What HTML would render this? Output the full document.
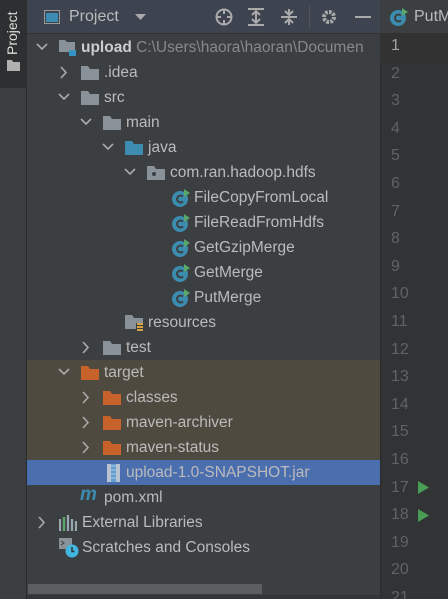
<!DOCTYPE html>
<html><head><style>
*{margin:0;padding:0;box-sizing:border-box}
html,body{width:448px;height:599px;overflow:hidden}
body{background:#3c3f41;font-family:"Liberation Sans",sans-serif;position:relative;color:#bbbbbb}
.strip{position:absolute;left:0;top:0;width:27px;height:599px;background:#3c3f41;border-right:1px solid #2b2b2b}
.tab{position:absolute;left:0;top:0;width:27px;height:88px;background:#2d2f30}
.tab span{position:absolute;left:4px;top:55px;transform:rotate(-90deg);transform-origin:0 0;font-size:14px;color:#ddd}
.hdr{position:absolute;left:27px;top:0;width:353px;height:34px;background:#3d4450;border-bottom:1px solid #323232}
.row{position:absolute;left:27px;width:353px;height:25px;font-size:15.5px;line-height:25px;white-space:nowrap}
.row svg{position:absolute}
.row .t{position:absolute}
.ed{position:absolute;left:380px;top:0;width:68px;height:599px;background:#313335;border-left:1px solid #2b2b2b}
.edh{position:absolute;left:380px;top:0;width:68px;height:34px;background:#3c3f41;border-bottom:1px solid #323232}
.ln{position:absolute;left:391px;width:30px;font-size:16px;color:#606366}
</style></head><body>
<div class="strip"><div class="tab"><span>Project</span>
<svg style="position:absolute;left:7px;top:60px" width="13" height="11"><path d="M0 0h5l1 2h7v9H0z" fill="#b0b0b0"/></svg></div></div>
<div class="hdr">
<svg style="position:absolute;left:17px;top:10px" width="16" height="14"><rect x="0.5" y="0.5" width="15" height="13" fill="none" stroke="#999" /><rect x="2" y="3" width="12" height="9" fill="#3c8cb4"/></svg>
<span style="position:absolute;left:42px;top:8px;font-size:16px;color:#bbb">Project</span>
<svg style="position:absolute;left:108px;top:14px" width="11" height="7"><path d="M0 0h11L5.5 6z" fill="#aaa"/></svg>
<svg style="position:absolute;left:188px;top:8px" width="18" height="18"><circle cx="9" cy="9" r="7.5" fill="none" stroke="#aaa" stroke-width="2"/><path d="M9 1v5M9 12v5M1 9h5M12 9h5" stroke="#aaa" stroke-width="2"/></svg>
<svg style="position:absolute;left:221px;top:8px" width="16" height="18"><path d="M0 1h16M0 17h16M8 4v10M4 7l4-4 4 4M4 11l4 4 4-4" stroke="#aaa" stroke-width="2" fill="none"/></svg>
<svg style="position:absolute;left:254px;top:8px" width="16" height="18"><path d="M0 9h16M8 1v6M8 11v6M4 3l4 4 4-4M4 15l4-4 4 4" stroke="#aaa" stroke-width="2" fill="none"/></svg>
<div style="position:absolute;left:282px;top:6px;width:1px;height:22px;background:#555"></div>
<svg style="position:absolute;left:294px;top:9px" width="16" height="16"><circle cx="8" cy="8" r="5" fill="none" stroke="#aaa" stroke-width="4" stroke-dasharray="2.6 1.3"/><circle cx="8" cy="8" r="2" fill="#3d4450"/></svg>
<div style="position:absolute;left:328px;top:16px;width:16px;height:2px;background:#aaa"></div>
</div>

<div class="row" style="top:35px"><svg style="left:9px;top:8px" width="12" height="8"><path d="M1 1l5 5 5-5" stroke="#aaa" stroke-width="1.6" fill="none"/></svg>
<svg style="left:32px;top:5px" width="18" height="16"><path d="M0 0h6l2 2h8v10H0z" fill="#8a9299"/><rect x="10" y="10" width="7" height="6" fill="#3592c4"/></svg>
<span class="t" style="left:54px"><b style="color:#ccc">upload</b> <span style="color:#888">C:\Users\haora\haoran\Documen</span></span></div>

<div id="tree"></div>
<script>
var rows=[
[60,1,'c','f','.idea'],[85,1,'o','f','src'],[110,2,'o','f','main'],[135,3,'o','j','java'],[160,4,'o','p','com.ran.hadoop.hdfs'],
[185,5,'','c','FileCopyFromLocal'],[210,5,'','c','FileReadFromHdfs'],[235,5,'','c','GetGzipMerge'],[260,5,'','c','GetMerge'],[285,5,'','c','PutMerge'],
[310,3,'','r','resources'],[335,2,'c','f','test'],[360,1,'o','t','target'],[385,2,'c','t','classes'],[410,2,'c','t','maven-archiver'],[435,2,'c','t','maven-status'],
[460,2,'','jar','upload-1.0-SNAPSHOT.jar'],[485,1,'','m','pom.xml'],[510,0,'c','l','External Libraries'],[535,0,'','s','Scratches and Consoles']];
var h='';
rows.forEach(function(r){
 var top=r[0],lv=r[1],x=9+lv*22,bg='';
 if(top>=360&&top<460)bg='background:#4f4a3f;';
 if(top==460)bg='background:#4b6eaf;';
 h+='<div class="row" style="top:'+top+'px;'+bg+'">';
 if(r[2]=='c')h+='<svg style="left:'+(x+2)+'px;top:6px" width="8" height="13"><path d="M1 1l5 5.5-5 5.5" stroke="#aaa" stroke-width="1.6" fill="none"/></svg>';
 if(r[2]=='o')h+='<svg style="left:'+x+'px;top:8px" width="12" height="8"><path d="M1 1l5 5 5-5" stroke="#aaa" stroke-width="1.6" fill="none"/></svg>';
 var ix=x+23,i=r[3],s='';
 if(i=='f'||i=='j'||i=='t'){var c=i=='f'?'#8a9299':i=='j'?'#3d8cb0':'#c7622b';s='<svg style="left:'+ix+'px;top:6px" width="18" height="14"><path d="M0 0h7l2 3h9v11H0z" fill="'+c+'"/></svg>';}
 if(i=='p')s='<svg style="left:'+ix+'px;top:6px" width="18" height="14"><path d="M0 0h7l2 3h9v11H0z" fill="#8a9299"/><circle cx="7" cy="8" r="2" fill="#3c3f41"/></svg>';
 if(i=='r')s='<svg style="left:'+ix+'px;top:5px" width="19" height="17"><path d="M0 0h7l2 3h9v11H0z" fill="#8a9299"/><rect x="11" y="8" width="7" height="9" fill="#3c3f41"/><path d="M12 9h6M12 12h6M12 15h6" stroke="#d9a343" stroke-width="2"/></svg>';
 if(i=='c')s='<svg style="left:'+(ix+3)+'px;top:4px" width="19" height="18"><circle cx="8" cy="10" r="8" fill="#3c8cb0"/><path d="M11 7.5a3.5 3.5 0 1 0 0 5" stroke="#3c3f41" stroke-width="2" fill="none"/><path d="M12 0l6 4-6 4z" fill="#59a869"/></svg>';
 if(i=='jar')s='<svg style="left:'+(ix+3)+'px;top:4px" width="16" height="18"><rect x="1" y="0" width="13" height="18" fill="#b9c4d2"/><rect x="5" y="0" width="5" height="18" fill="#5f9fd3"/><path d="M5 2h5M5 6h5M5 10h5M5 14h5" stroke="#b9c4d2" stroke-width="1"/></svg>';
 if(i=='m')s='<span style="position:absolute;left:'+(ix-1)+'px;top:-1px;font:italic bold 19px Liberation Sans,sans-serif;color:#3d8cb0">m</span>';
 if(i=='l')s='<svg style="left:'+ix+'px;top:5px" width="18" height="16"><path d="M1 4v12M5 2v14M9 0v16M13 4v12M17 6v10" stroke="#9aa7b0" stroke-width="2.2"/><path d="M5 2v14" stroke="#59a869" stroke-width="2.2"/></svg>';
 if(i=='s')s='<svg style="left:'+ix+'px;top:3px" width="20" height="20"><rect x="0" y="0" width="13" height="11" fill="#8a9299"/><path d="M2 3l3 2-3 2" stroke="#3c3f41" fill="none"/><circle cx="13" cy="13" r="6.5" fill="#40b6e0"/><path d="M13 9v4.5h2.5" stroke="#333" stroke-width="1.5" fill="none"/></svg>';
 var tx=ix+23; if(i=='c')tx=ix+25;
 h+=s+'<span class="t" style="left:'+tx+'px">'+r[4]+'</span></div>';
});
document.getElementById('tree').innerHTML=h;
</script>
<div style="position:absolute;left:28px;top:584px;width:234px;height:10px;background:#5b5d5f"></div>
<div style="position:absolute;left:27px;top:595px;width:353px;height:4px;background:#333537"></div>

<div class="ed"></div>
<div class="edh">
<svg style="position:absolute;left:10px;top:8px" width="19" height="18"><circle cx="8" cy="10" r="8" fill="#3c8cb0"/><path d="M11 7.5a3.5 3.5 0 1 0 0 5" stroke="#3c3f41" stroke-width="2" fill="none"/><path d="M12 0l6 4-6 4z" fill="#59a869"/></svg>
<span style="position:absolute;left:34px;top:8px;font-size:16px;color:#bbb">PutM</span></div>
<div style="position:absolute;left:380px;top:34px;width:68px;height:28px;background:#323232"></div>
<script>
var l='';for(var n=1;n<=21;n++){var y=37+(n-1)*27.6;l+='<div class="ln" style="top:'+y+'px;'+(n==1?'color:#a4a3a3':'')+'">'+n+'</div>';}
l+='<svg style="position:absolute;left:418px;top:481px" width="11" height="13"><path d="M0 0l11 6.5L0 13z" fill="#499c54"/></svg>';
l+='<svg style="position:absolute;left:418px;top:509px" width="11" height="13"><path d="M0 0l11 6.5L0 13z" fill="#499c54"/></svg>';
document.write(l);
</script>
</body></html>
